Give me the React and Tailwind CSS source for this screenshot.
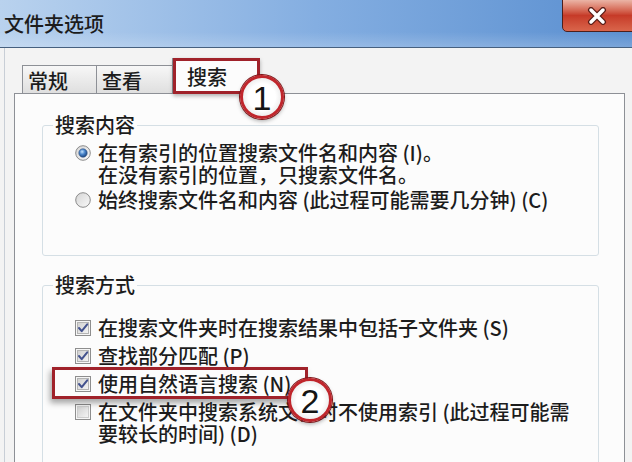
import React from 'react';

const Radio = ({ checked }) => (
  <svg width="16" height="16" viewBox="0 0 16 16" className="shrink-0 mt-[3px]">
    <defs>
      <linearGradient id="radioBg" x1="0" y1="0" x2="1" y2="1">
        <stop offset="0" stopColor="#d4d4d4" />
        <stop offset="1" stopColor="#fafafa" />
      </linearGradient>
      <radialGradient id="radioDot" cx="0.4" cy="0.35" r="0.7">
        <stop offset="0" stopColor="#c4e2fb" />
        <stop offset="0.45" stopColor="#4a86cc" />
        <stop offset="1" stopColor="#173f78" />
      </radialGradient>
    </defs>
    <circle cx="8" cy="8" r="7.3" fill="url(#radioBg)" stroke="#8c8c8c" strokeWidth="1" />
    {checked && <circle cx="8" cy="8" r="4.2" fill="url(#radioDot)" stroke="#2d4f80" strokeWidth="0.6" />}
  </svg>
);

const Checkbox = ({ checked }) => (
  <svg width="16" height="16" viewBox="0 0 16 16" className="shrink-0 mt-[3px]">
    <defs>
      <linearGradient id="cbInner" x1="0" y1="0" x2="1" y2="1">
        <stop offset="0" stopColor="#cfcfcf" />
        <stop offset="1" stopColor="#f5f5f5" />
      </linearGradient>
    </defs>
    <rect x="0.5" y="0.5" width="15" height="15" fill="#f6f6f6" stroke="#8e8e8e" />
    <rect x="2.5" y="2.5" width="11" height="11" fill="url(#cbInner)" stroke={checked ? '#b4b4b4' : '#cdcdcd'} />
    {checked && (
      <path d="M4 8 L6.7 11.2 L12.2 4.3" fill="none" stroke="#43528e" strokeWidth="2" strokeLinecap="round" strokeLinejoin="round" />
    )}
  </svg>
);

// numbered marker drawn over the screenshot
const Marker = ({ n, className }) => (
  <div
    className={`absolute w-[44px] h-[44px] rounded-full border-[3px] border-[#c0262c] ring-1 ring-[#7e1518] bg-radial from-white via-white to-[#d9d9d9] flex items-center justify-center shadow-[0_2px_4px_rgba(0,0,0,0.35)] ${className}`}
  >
    <span className="font-['Liberation_Sans',Arial,sans-serif] text-[34px] leading-none text-[#151515] mt-[2px]">{n}</span>
  </div>
);

const Tab = ({ label, className }) => (
  <div className={`h-[28px] border border-b-0 border-[#8d9096] bg-linear-to-b from-[#f7f7f7] to-[#dfdfdf] pl-[5px] pt-[4px] leading-[22px] ${className}`}>
    {label}
  </div>
);

export default function App() {
  return (
    <div className="relative w-[632px] h-[462px] overflow-hidden bg-[#f3f3f3] text-[20px] font-medium text-[#1c1c1c] font-['Noto_Sans_CJK_SC','Noto_Sans',sans-serif]">
      {/* title bar */}
      <div className="relative h-[48px] bg-linear-to-r from-[#b9d2ee] via-[#84aee1] to-[#5a8fd0] border-b border-[#46607f] flex items-center">
        <div className="absolute inset-x-0 bottom-0 h-[15px] bg-linear-to-b from-[#ffffff00] to-[#ffffff30]" />
        <span className="relative pl-[4px] leading-none">文件夹选项</span>
        <div className="absolute right-[-8px] top-[-1px] w-[78px] h-[33px] rounded-bl-[5px] border border-[#4d1f1c] bg-linear-to-b from-[#eab4a6] via-[#c63a28] to-[#d9654b] flex items-center justify-center pr-[8px]">
          <svg width="20" height="18" viewBox="0 0 20 18">
            <path d="M4 3 L16 15 M16 3 L4 15" stroke="#5b1d17" strokeWidth="6" strokeLinecap="round" />
            <path d="M4 3 L16 15 M16 3 L4 15" stroke="#ffffff" strokeWidth="3.5" strokeLinecap="round" />
          </svg>
        </div>
      </div>

      {/* body */}
      <div className="ml-[4px] border-l border-[#c8ced6] pl-[9px] pt-[10px]">
        <div className="ml-[8px] h-[35px] flex items-end">
          <Tab label="常规" className="w-[75px]" />
          <Tab label="查看" className="w-[77px] -ml-px pl-[4px]" />
          <div className="relative z-10 -ml-px -mb-px w-[87px] h-[36px] border border-b-0 border-[#8d9096] bg-[#fcfcfc] pl-[14px] pt-[7px] leading-[22px]">
            搜索
          </div>
        </div>

        <div className="w-[611px] h-[400px] border border-[#8d9096] bg-[#fcfcfc] pl-[27px] pr-[25px] pt-[19px]">
          <fieldset className="border border-[#d5dfe5] rounded-[3px]">
            <legend className="ml-[10px] px-[2px] leading-[24px]">搜索内容</legend>
            <div className="pl-[32px] pt-[5px] pb-[44px] leading-[22px]">
              <div className="flex items-start gap-[7px]">
                <Radio checked />
                <div>
                  <div>在有索引的位置搜索文件名和内容 (I)。</div>
                  <div>在没有索引的位置，只搜索文件名。</div>
                </div>
              </div>
              <div className="mt-[3px] flex items-start gap-[7px]">
                <Radio />
                <div>始终搜索文件名和内容 (此过程可能需要几分钟) (C)</div>
              </div>
            </div>
          </fieldset>

          <fieldset className="mt-[17px] border border-[#d5dfe5] rounded-[3px]">
            <legend className="ml-[10px] px-[2px] leading-[24px]">搜索方式</legend>
            <div className="pl-[32px] pt-[20px] pb-[30px] leading-[22px] flex flex-col gap-[6px]">
              <div className="flex items-start gap-[7px]">
                <Checkbox checked />
                <div>在搜索文件夹时在搜索结果中包括子文件夹 (S)</div>
              </div>
              <div className="flex items-start gap-[7px]">
                <Checkbox checked />
                <div>查找部分匹配 (P)</div>
              </div>
              <div className="flex items-start gap-[7px]">
                <Checkbox checked />
                <div>使用自然语言搜索 (N)</div>
              </div>
              <div className="flex items-start gap-[7px]">
                <Checkbox />
                <div>
                  <div>在文件夹中搜索系统文件时不使用索引 (此过程可能需</div>
                  <div>要较长的时间) (D)</div>
                </div>
              </div>
            </div>
          </fieldset>
        </div>
      </div>

      {/* annotations */}
      <div className="absolute left-[173px] top-[58px] w-[87px] h-[36px] border-[3px] border-[#a0222a] shadow-[0_2px_4px_rgba(0,0,0,0.3)] z-20" />
      <Marker n="1" className="left-[240px] top-[75px] z-30" />
      <div className="absolute left-[52px] top-[367px] w-[256px] h-[32px] border-[3px] border-[#a0222a] shadow-[-2px_4px_6px_rgba(0,0,0,0.35)] z-20" />
      <Marker n="2" className="left-[288px] top-[378px] z-30" />
    </div>
  );
}
